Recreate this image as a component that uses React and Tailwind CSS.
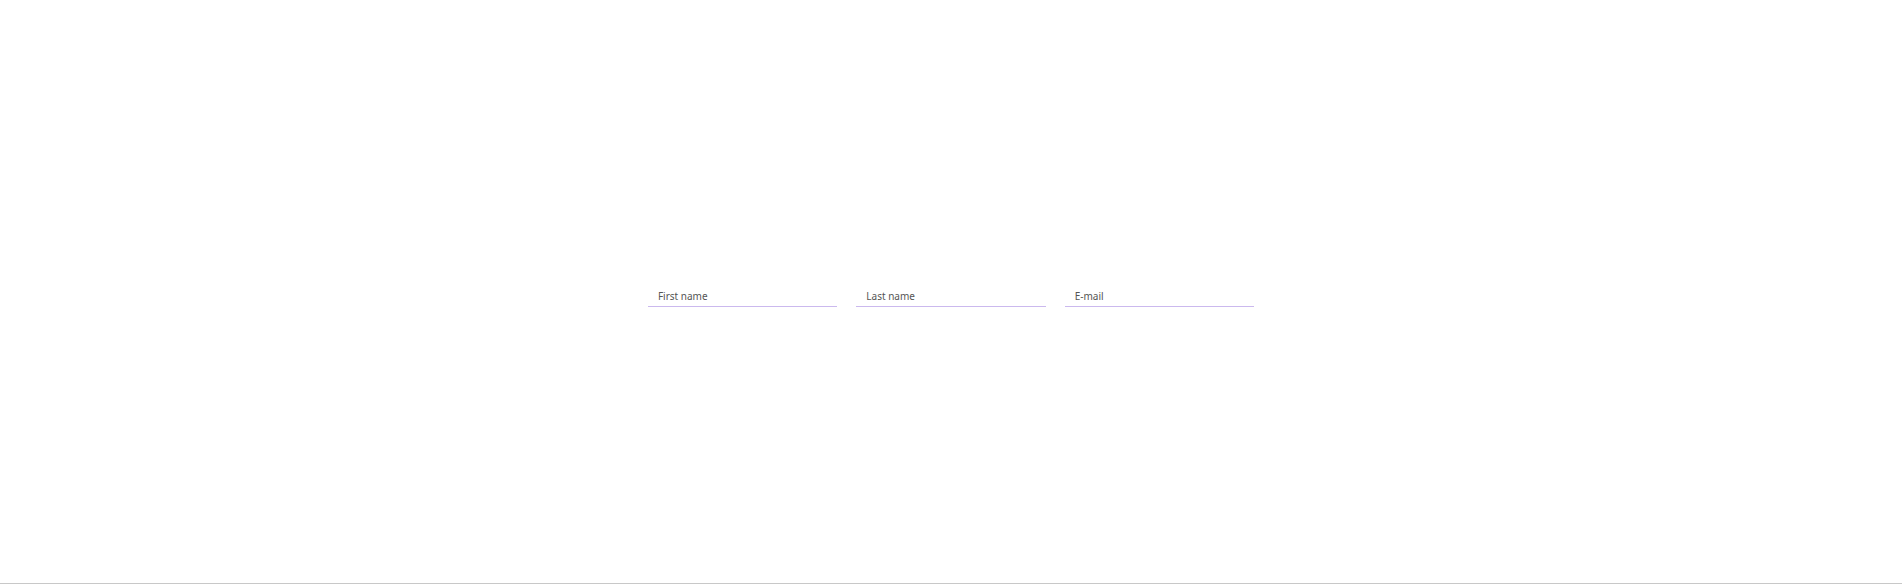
import React from "react";

const Field = ({ placeholder }) => (
  <input
    type="text"
    placeholder={placeholder}
    className="h-[22px] w-[189.4px] border-0 border-b border-[#cbb9ee] bg-transparent px-[10px] text-[10px] text-[#555] outline-none placeholder:text-[#555]"
    style={{ fontFamily: '"Noto Sans", "Open Sans", sans-serif' }}
  />
);

export default function App() {
  return (
    <div className="flex h-[584px] w-full items-center justify-center border-b border-[#c8c8c8] bg-white">
      <form className="mt-[9px] flex gap-[19px]">
        <Field placeholder="First name" />
        <Field placeholder="Last name" />
        <Field placeholder="E-mail" />
      </form>
    </div>
  );
}
